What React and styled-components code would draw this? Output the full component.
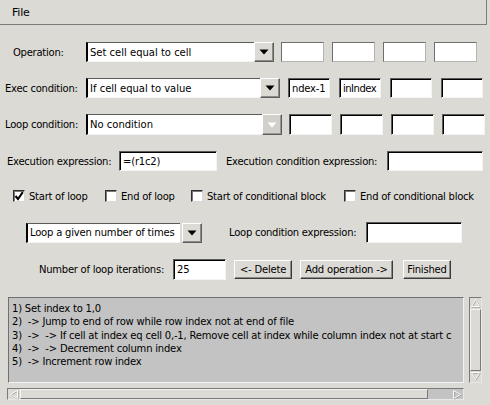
import React from 'react';
import styled, { createGlobalStyle } from 'styled-components';

const GlobalStyle = createGlobalStyle`
  html, body { margin: 0; padding: 0; background: #dcdad5; }
  body { font-family: "DejaVu Sans", "Liberation Sans", sans-serif; }
`;

const Window = styled.div`
  width: 490px;
  height: 405px;
  background: #dcdad5;
  overflow: hidden;
  display: flex;
  flex-direction: column;
  font-size: 10px;
  color: #000;
`;

const MenuBar = styled.div`
  box-sizing: border-box;
  flex: none;
  width: 487px;
  height: 25px;
  border-right: 1px solid #7c7c7c;
  border-bottom: 1px solid #7c7c7c;
  display: flex;
  align-items: center;
  padding-left: 12px;
`;

const MenuItem = styled.span`
  font-size: 11px;
  letter-spacing: -0.2px;
`;

const Row = styled.div`
  display: flex;
  align-items: center;
  flex: none;
  height: ${(p) => p.$h || 20}px;
  margin-top: ${(p) => p.$mt}px;
  padding-left: ${(p) => p.$pl}px;
`;

const Label = styled.span`
  flex: none;
  width: ${(p) => p.$w}px;
  margin-left: ${(p) => p.$ml || 0}px;
  white-space: nowrap;
  letter-spacing: -0.25px;
`;

const Field = styled.div`
  box-sizing: border-box;
  flex: none;
  width: ${(p) => p.$w}px;
  height: ${(p) => p.$h || 20}px;
  margin-left: ${(p) => p.$ml || 0}px;
  background: #fff;
  border: 1px solid;
  border-color: ${(p) => (p.$soft ? '#6e6e6e #b4b4b4 #b4b4b4 #6e6e6e' : '#5a5a5a #f4f4f4 #f4f4f4 #5a5a5a')};
  box-shadow: ${(p) => (p.$soft ? 'none' : 'inset 1px 1px 0 #000')};
  display: flex;
  align-items: center;
  padding: 0 1px 0 3px;
  overflow: hidden;
  white-space: nowrap;
  letter-spacing: ${(p) => (p.$tight ? '-0.5px' : '-0.2px')};
`;

const Combo = styled.div`
  display: flex;
  flex: none;
  gap: ${(p) => p.$gap || 0}px;
  height: ${(p) => p.$h || 20}px;
`;

const ComboText = styled.div`
  box-sizing: border-box;
  width: ${(p) => p.$w}px;
  height: 100%;
  background: #fff;
  border-top: 1px solid #5a5a5a;
  border-left: 2px solid #000;
  border-bottom: 1px solid #f4f4f4;
  display: flex;
  align-items: center;
  padding-left: 2px;
  white-space: nowrap;
  overflow: hidden;
  letter-spacing: ${(p) => (p.$tight ? '-0.2px' : '0')};
`;

const ArrowButton = styled.div`
  box-sizing: border-box;
  width: 20px;
  height: 100%;
  background: ${(p) => (p.$disabled ? '#d2d0cb' : '#dcdad5')};
  border: 1px solid;
  border-color: #fff #5e5e5e #5e5e5e #fff;
  box-shadow: ${(p) => (p.$disabled ? 'inset -1px -1px 0 #9a9893' : 'inset -1px -1px 0 #8c8a86')};
  display: flex;
  align-items: center;
  justify-content: center;
`;

const CheckGroup = styled.label`
  display: flex;
  align-items: center;
  flex: none;
  width: ${(p) => (p.$w ? `${p.$w}px` : 'auto')};
  white-space: nowrap;
  letter-spacing: -0.25px;
`;

const Box = styled.span`
  box-sizing: border-box;
  flex: none;
  width: 12px;
  height: 12px;
  margin-right: 4px;
  background: #fff;
  border: 1px solid;
  border-color: #2e2e2e #d8d8d8 #d8d8d8 #2e2e2e;
  box-shadow: inset 1px 1px 0 #7a7a7a;
  display: flex;
  align-items: center;
  justify-content: center;
`;

const Button = styled.div`
  box-sizing: border-box;
  flex: none;
  width: ${(p) => p.$w}px;
  height: 19px;
  margin-left: ${(p) => p.$ml || 0}px;
  background: #dcdad5;
  border: 1px solid;
  border-color: #fff #3c3c3c #3c3c3c #fff;
  box-shadow: inset -1px -1px 0 #8c8a86;
  display: flex;
  align-items: center;
  justify-content: center;
  white-space: nowrap;
  letter-spacing: -0.2px;
`;

const ListArea = styled.div`
  display: grid;
  grid-template-columns: 456px 13px;
  grid-template-rows: 86px 12px;
  column-gap: 5px;
  row-gap: 5px;
  margin-top: 17px;
  padding-left: 8px;
`;

const ListBox = styled.div`
  box-sizing: border-box;
  background: #c3c3c3;
  border: 1px solid;
  border-color: #6f6f6f #f2f2f2 #f2f2f2 #6f6f6f;
  padding: 4px 0 0 3px;
  overflow: hidden;
  white-space: pre;
  line-height: 13.3px;
  letter-spacing: -0.2px;
`;

const VScroll = styled.div`
  box-sizing: border-box;
  display: flex;
  flex-direction: column;
  border: 1px solid;
  border-color: #7a7a7a #e8e8e8 #e8e8e8 #7a7a7a;
`;

const HScroll = styled.div`
  box-sizing: border-box;
  display: flex;
  margin-left: -1px;
  border: 1px solid;
  border-color: #7a7a7a #e8e8e8 #e8e8e8 #7a7a7a;
`;

const ScrollArrow = styled.div`
  flex: none;
  width: ${(p) => (p.$v ? '100%' : '12px')};
  height: ${(p) => (p.$v ? '11px' : '100%')};
  display: flex;
  align-items: center;
  justify-content: center;
  background: ${(p) => p.$bg || '#dcdad5'};
`;

const Thumb = styled.div`
  box-sizing: border-box;
  flex: ${(p) => (p.$grow ? '1' : 'none')};
  width: ${(p) => (p.$w ? `${p.$w}px` : 'auto')};
  background: #dcdad5;
  border: 1px solid;
  border-color: #f4f4f4 #7a7a7a #7a7a7a #f4f4f4;
`;

const Track = styled.div`
  flex: 1;
  background: #c3c3c3;
`;

const Tri = ({ disabled }) => (
  <svg width="10" height="6" viewBox="0 0 10 6">
    <polygon points="0.5,0.5 9.5,0.5 5,5.5" fill={disabled ? '#fff' : '#000'} />
  </svg>
);

const Check = () => (
  <svg width="10" height="10" viewBox="0 0 10 10">
    <path d="M1.5 5 L4 8 L8.8 1.2" fill="none" stroke="#000" strokeWidth="2" />
  </svg>
);

const HollowArrow = ({ dir }) => {
  const pts = {
    up: '1.5,8.5 5.5,1.5 9.5,8.5',
    down: '1.5,1.5 9.5,1.5 5.5,8.5',
    left: '8.5,1.5 8.5,9.5 1.5,5.5',
    right: '1.5,1.5 1.5,9.5 8.5,5.5',
  }[dir];
  return (
    <svg width="11" height="11" viewBox="0 0 11 11">
      <polygon points={pts} fill="none" stroke="#9a9893" strokeWidth="1" transform="translate(0.6,0.6)" />
      <polygon points={pts} fill="none" stroke="#fbfbfb" strokeWidth="1" />
    </svg>
  );
};

const ComboBox = ({ w, h, text, disabled, gap, tight }) => (
  <Combo $h={h} $gap={gap}>
    <ComboText $w={w} $tight={tight}>{text}</ComboText>
    <ArrowButton $disabled={disabled}>
      <Tri disabled={disabled} />
    </ArrowButton>
  </Combo>
);

const lines = [
  '1) Set index to 1,0',
  '2)  -> Jump to end of row while row index not at end of file',
  '3)  ->  -> If cell at index eq cell 0,-1, Remove cell at index while column index not at start c',
  '4)  ->  -> Decrement column index',
  '5)  -> Increment row index',
];

export default function App() {
  return (
    <>
      <GlobalStyle />
      <Window>
        <MenuBar>
          <MenuItem>File</MenuItem>
        </MenuBar>

        <Row $mt={17} $pl={13} $h={20}>
          <Label $w={73}>Operation:</Label>
          <ComboBox w={168} text="Set cell equal to cell" />
          <Field $soft $w={43} $ml={7} />
          <Field $soft $w={43} $ml={8} />
          <Field $soft $w={43} $ml={8} />
          <Field $soft $w={43} $ml={8} />
        </Row>

        <Row $mt={16} $pl={5} $h={20}>
          <Label $w={81}>Exec condition:</Label>
          <ComboBox w={174} text="If cell equal to value" />
          <Field $w={42} $ml={8}>ndex-1</Field>
          <Field $w={42} $ml={9} $tight>inIndex</Field>
          <Field $w={42} $ml={9} />
          <Field $w={42} $ml={9} />
        </Row>

        <Row $mt={16} $pl={5} $h={21}>
          <Label $w={81}>Loop condition:</Label>
          <ComboBox w={176} h={21} text="No condition" disabled />
          <Field $w={43} $h={21} $ml={7} />
          <Field $w={43} $h={21} $ml={8} />
          <Field $w={43} $h={21} $ml={8} />
          <Field $w={43} $h={21} $ml={8} />
        </Row>

        <Row $mt={16} $pl={7} $h={20}>
          <Label $w={112}>Execution expression:</Label>
          <Field $w={98}>=(r1c2)</Field>
          <Label $w={161} $ml={9}>Execution condition expression:</Label>
          <Field $w={96} />
        </Row>

        <Row $mt={19} $pl={13} $h={12}>
          <CheckGroup $w={92}>
            <Box>
              <Check />
            </Box>
            Start of loop
          </CheckGroup>
          <CheckGroup $w={86}>
            <Box />
            End of loop
          </CheckGroup>
          <CheckGroup $w={153}>
            <Box />
            Start of conditional block
          </CheckGroup>
          <CheckGroup>
            <Box />
            End of conditional block
          </CheckGroup>
        </Row>

        <Row $mt={20} $pl={26} $h={21}>
          <ComboBox w={154} gap={2} tight text="Loop a given number of times" />
          <Label $w={137} $ml={27}>Loop condition expression:</Label>
          <Field $w={96} $h={21} />
        </Row>

        <Row $mt={16} $pl={39} $h={21}>
          <Label $w={134}>Number of loop iterations:</Label>
          <Field $w={53} $h={21}>25</Field>
          <Button $w={58} $ml={8}>&lt;- Delete</Button>
          <Button $w={93} $ml={8}>Add operation -&gt;</Button>
          <Button $w={48} $ml={10}>Finished</Button>
        </Row>

        <ListArea>
          <ListBox>{lines.join('\n')}</ListBox>
          <VScroll>
            <ScrollArrow $v>
              <HollowArrow dir="up" />
            </ScrollArrow>
            <Thumb $grow />
            <ScrollArrow $v>
              <HollowArrow dir="down" />
            </ScrollArrow>
          </VScroll>
          <HScroll>
            <ScrollArrow>
              <HollowArrow dir="left" />
            </ScrollArrow>
            <Thumb $w={408} />
            <Track />
            <ScrollArrow $bg="#c3c3c3">
              <HollowArrow dir="right" />
            </ScrollArrow>
          </HScroll>
        </ListArea>
      </Window>
    </>
  );
}
